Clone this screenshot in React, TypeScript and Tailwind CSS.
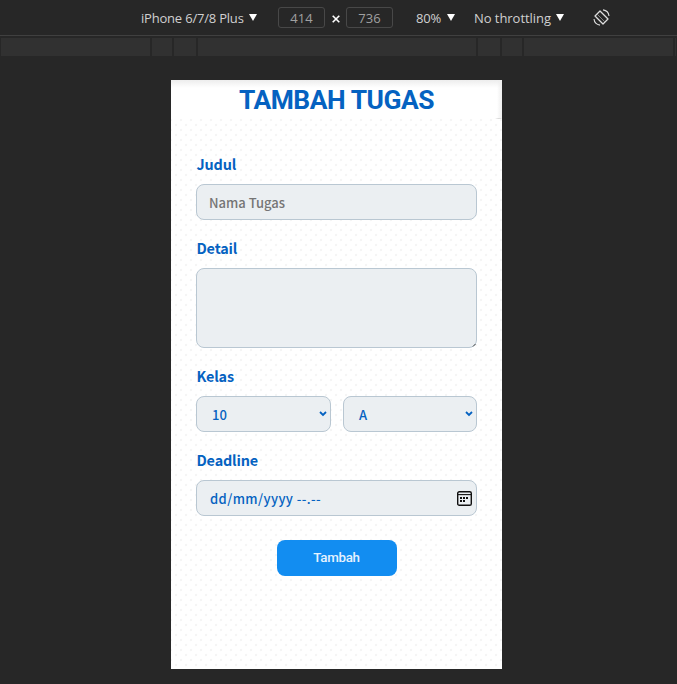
import type { ReactNode } from "react";

const Arrow = () => (
  <svg className="block h-[7px] w-[8px] shrink-0" viewBox="0 0 8 7">
    <path d="M0 0H8L4 7Z" fill="#fff" />
  </svg>
);

const Chevron = () => (
  <svg className="h-[6px] w-[8px]" viewBox="0 0 8 6" fill="none">
    <path d="M1 1L4 4L7 1" stroke="#0562c1" strokeWidth="1.8" />
  </svg>
);

const RotateIcon = () => (
  <svg className="h-[17px] w-[17px]" viewBox="0 0 17 17" fill="none" stroke="#dedede" strokeWidth="1.1">
    <path d="M7 2L15 10L10 15L2 7Z" strokeWidth="1.3" strokeLinejoin="round" />
    <path d="M10 .9C13.2 1.4 15.7 3.9 16 7M7 16.1C3.8 15.6 1.3 13.1 1 10" />
    <path d="M4.5 5.5L11.5 12.5" strokeWidth=".5" />
  </svg>
);

const CalendarIcon = () => (
  <svg className="h-[15px] w-[15px]" viewBox="0 0 15 15">
    <rect x=".7" y=".7" width="13.6" height="13.6" rx="1.6" fill="none" stroke="#111" strokeWidth="1.4" />
    <path d="M1 3.6H14" stroke="#111" strokeWidth="1.1" />
    <path d="M6 6h2v2H6zM9 6h2v2H9zM3 6h2v2H3zM3 9h2v2H3zM6 9h2v2H6z" fill="#111" />
  </svg>
);

const segments = ["w-[149px]", "w-5", "w-[22px]", "w-[278px]", "w-[22px]", "w-5", "w-[149px]", "w-px"];

function Label({ children }: { children: ReactNode }) {
  return <div className="h-[31px] pl-[0.5px] text-[14.4px] leading-[22px] font-bold tracking-[-0.15px] whitespace-nowrap">{children}</div>;
}

const box = "flex items-center rounded-lg border border-[#b9c7d2] bg-[#ebeff2] text-[13px] font-medium";

export default function App() {
  return (
    <div className="h-[684px] w-[677px] overflow-hidden bg-[#272727]">
      <div className="flex h-9 items-center border-b border-[#404040] pl-[141px] font-['Open_Sans','Noto_Sans',sans-serif] text-[13px] text-[#d0d0d0]">
        <span className="w-[108px] pt-[2px] tracking-[-0.2px] whitespace-nowrap">iPhone 6/7/8 Plus</span>
        <Arrow />
        <div className="ml-[21px] flex h-[21px] w-[47px] items-center justify-center rounded-[3px] border border-[#484848] pt-[2px] text-[#a0a0a0]">414</div>
        <svg className="mr-[5px] ml-[7px] mt-[3px] h-2 w-2" viewBox="0 0 8 8"><path d="M.7.7L7.3 7.3M7.3.7L.7 7.3" stroke="#fff" strokeWidth="1.6" /></svg>
        <div className="ml-px flex h-[21px] w-[47px] items-center justify-center rounded-[3px] border border-[#484848] pt-[2px] text-[#a0a0a0]">736</div>
        <span className="ml-[23px] w-[31px] pt-[2px] tracking-[-0.2px]">80%</span>
        <Arrow />
        <span className="ml-[19px] w-[82px] pt-[2px] tracking-[-0.05px] whitespace-nowrap">No throttling</span>
        <Arrow />
        <div className="ml-[29px]"><RotateIcon /></div>
      </div>
      <div className="mt-[2px] flex h-[18px] gap-[2px] pl-px">
        {segments.map((width, i) => <div key={i} className={`${width} shrink-0 bg-[#313131]`} />)}
      </div>
      <main className="mt-6 ml-[171px] h-[589px] w-[331px] bg-white bg-[radial-gradient(circle_at_5px_5px,#f5f5f5_1.2px,transparent_1.6px),radial-gradient(circle_at_10px_10px,#f5f5f5_1.2px,transparent_1.6px),radial-gradient(circle_at_0px_10px,#f5f5f5_1.2px,transparent_1.6px),radial-gradient(circle_at_10px_0px,#f5f5f5_1.2px,transparent_1.6px),radial-gradient(circle_at_0px_0px,#f5f5f5_1.2px,transparent_1.6px)] bg-[size:10px_10px] font-['Noto_Sans_CJK_JP',sans-serif] text-[#0562c1]">
        <h1 className="relative flex h-[39px] items-center justify-center bg-white bg-linear-to-b from-[#ededed] to-white to-20% pt-px font-['Roboto',sans-serif] text-[26.4px] leading-none font-bold tracking-[-0.45px]">
          <span>TAMBAH TUGAS</span>
          <span className="absolute right-0 bottom-0 h-px w-[7px] bg-linear-to-r from-transparent to-[#aaa]" />
          <span className="absolute top-0 right-0 h-full w-[5px] bg-linear-to-r from-transparent to-[#eee]" />
        </h1>
        <form className="w-[306px] pt-[34px] pl-[25px]">
          <Label>Judul</Label>
          <div className={`${box} h-9 pt-px pl-3 text-[#757575]`}>Nama Tugas</div>
          <div className="pt-[17px]"><Label>Detail</Label></div>
          <div className={`${box} h-20 items-end justify-end`}>
            <svg className="h-1 w-1" viewBox="0 0 4 4"><path d="M1 3.5L3.5 1" stroke="#444" /></svg>
          </div>
          <div className="pt-[17px]"><Label>Kelas</Label></div>
          <div className="flex gap-3">
            <div className={`${box} h-9 w-[135px] justify-between pr-[3px] pl-[15px]`}><span className="pt-px">10</span><Chevron /></div>
            <div className={`${box} h-9 w-[134px] justify-between pr-[3px] pl-[15px]`}><span className="pt-px">A</span><Chevron /></div>
          </div>
          <div className="pt-[17px]"><Label>Deadline</Label></div>
          <div className={`${box} h-9 justify-between pr-[4px] pl-[13px] tracking-[0.4px]`}><span className="pt-px">dd/mm/yyyy --.--</span><CalendarIcon /></div>
          <button type="button" className="mt-6 ml-[80.5px] block h-9 w-[120px] rounded-lg bg-[#128df1] pb-px font-['Roboto',sans-serif] text-[13.33px] font-medium tracking-[-0.3px] text-[#e5f3ff]">Tambah</button>
        </form>
      </main>
    </div>
  );
}
